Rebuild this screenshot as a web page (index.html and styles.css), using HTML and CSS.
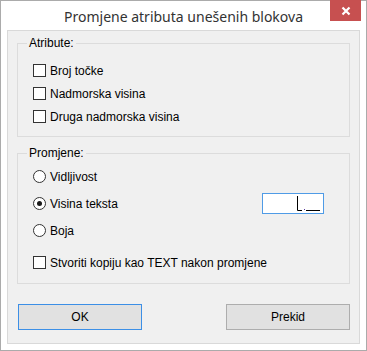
FILE: index.html
```html
<!DOCTYPE html>
<html lang="hr">
<head>
    <meta charset="UTF-8">
    <title>Promjene atributa unešenih blokova</title>
    <link rel="stylesheet" href="styles.css">
</head>
<body>

    <div class="window">
        <div class="titlebar">
            <span></span>
            <span class="title">Promjene atributa unešenih blokova</span>
            <span class="close">
                <svg width="10" height="10" viewBox="0 0 10 10">
                    <path d="M1.5 1.5 L8.5 8.5 M8.5 1.5 L1.5 8.5" stroke="#fff" stroke-width="2.2"/>
                </svg>
            </span>
        </div>

        <div class="client">
            <fieldset class="group group-attr">
                <legend>Atribute:</legend>
                <div class="row"><span class="check"></span>Broj točke</div>
                <div class="row"><span class="check"></span>Nadmorska visina</div>
                <div class="row"><span class="check"></span>Druga nadmorska visina</div>
            </fieldset>

            <fieldset class="group group-change">
                <legend>Promjene:</legend>
                <div class="row row-radio"><span class="radio"></span>Vidljivost</div>
                <div class="row row-radio">
                    <span class="radio on"></span>Visina teksta
                    <span class="field">
                        <svg width="60" height="19" viewBox="0 0 60 19">
                            <path d="M34.5 2 V16.5 H39" stroke="#000" stroke-width="1" fill="none"/>
                            <rect x="41" y="15" width="1" height="1" fill="#5a3ca0"/>
                            <path d="M43 16.5 H57" stroke="#000" stroke-width="1"/>
                        </svg>
                    </span>
                </div>
                <div class="row row-radio"><span class="radio"></span>Boja</div>
                <div class="row row-copy"><span class="check"></span>Stvoriti kopiju kao TEXT nakon promjene</div>
            </fieldset>

            <div class="buttons">
                <button class="btn btn-ok" type="button">OK</button>
                <button class="btn" type="button">Prekid</button>
            </div>
        </div>
    </div>

</body>
</html>
```

FILE: styles.css
```css
body {
    margin: 0;
    font-family: "Liberation Sans", Arial, sans-serif;
    font-size: 12px;
    color: #000;
    background-color: #ffffff;
}
.window {
    width: 367px;
    height: 351px;
    box-sizing: border-box;
    border: 1px solid #ababab;
    background-color: #fff;
}
.titlebar {
    height: 29px;
    display: grid;
    grid-template-columns: 1fr auto 1fr;
    align-items: center;
}
.title {
    font-family: "Noto Sans", "Open Sans", sans-serif;
    font-size: 14px;
    color: #333;
    padding-top: 1px;
}
.close {
    justify-self: end;
    align-self: start;
    margin-top: -1px;
    margin-right: 5px;
    width: 31px;
    height: 21px;
    background-color: #c75050;
    display: flex;
    align-items: center;
    justify-content: center;
}
.client {
    margin: 0 6px;
    height: 314px;
    box-sizing: border-box;
    border: 1px solid #d9d9d9;
    background-color: #f0f0f0;
    padding-top: 5px;
}
.group {
    margin: 0 9px;
    padding: 0 0 8px 15px;
    border: 1px solid #dcdcdc;
}
.group legend {
    margin-left: -6px;
    padding: 0 2px;
    line-height: 15px;
}
.group-attr {
    padding-top: 8px;
}
.group-change {
    margin-top: 9px;
    padding-top: 2px;
    padding-bottom: 9px;
}
.row {
    height: 23px;
    display: flex;
    align-items: center;
}
.row-radio {
    height: 27px;
}
.row-copy {
    margin-top: 7px;
}
.check {
    width: 13px;
    height: 13px;
    box-sizing: border-box;
    border: 1px solid #333;
    background-color: #fff;
    margin-right: 4px;
}
.radio {
    width: 13px;
    height: 13px;
    box-sizing: border-box;
    border: 1px solid #333;
    border-radius: 50%;
    background-color: #fff;
    margin-right: 4px;
    display: flex;
    align-items: center;
    justify-content: center;
}
.radio.on::after {
    content: "";
    width: 5px;
    height: 5px;
    border-radius: 50%;
    background-color: #1a1a1a;
}
.field {
    margin-left: auto;
    margin-right: 25px;
    width: 62px;
    height: 21px;
    box-sizing: border-box;
    border: 1px solid #4f9be6;
    background-color: #fff;
    display: flex;
}
.buttons {
    margin-top: 20px;
    padding: 0 9px 0 10px;
    display: flex;
    justify-content: space-between;
}
.btn {
    width: 124px;
    height: 26px;
    border: 1px solid #adadad;
    background-color: #e1e1e1;
    font-family: "Liberation Sans", Arial, sans-serif;
    font-size: 12px;
    color: #000;
    padding: 0;
}
.btn-ok {
    border-color: #3c8fe6;
}
```
